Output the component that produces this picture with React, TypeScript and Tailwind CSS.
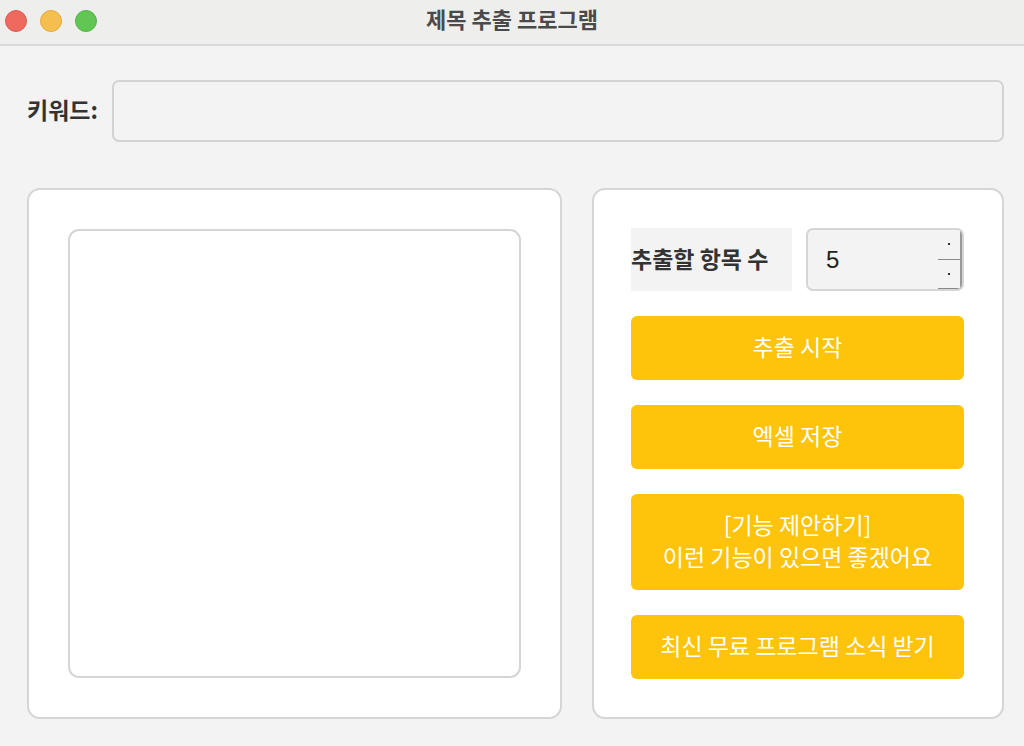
import React from 'react';

const font = { fontFamily: '"Noto Sans CJK KR", "Noto Sans", sans-serif' };

const ActionButton: React.FC<{ h: string; children: React.ReactNode }> = ({ h, children }) => (
  <button
    className={`w-full ${h} rounded-[6px] bg-[#fec30b] text-white text-[23px] leading-[32px] pb-[5px] flex flex-col items-center justify-center`}
  >
    {children}
  </button>
);

export default function App() {
  return (
    <div className="w-[1024px] h-[746px] bg-[#f3f3f3] flex flex-col overflow-hidden" style={font}>
      {/* title bar */}
      <div className="relative h-[46px] shrink-0 bg-[#eeeeec] border-b-2 border-[#d9d9d9] flex items-center justify-center">
        <div className="absolute left-[5px] top-[10px] flex gap-[13px]">
          <span className="w-[22px] h-[22px] rounded-full bg-[#ee6a5f] border border-[#dd5a50]" />
          <span className="w-[22px] h-[22px] rounded-full bg-[#f5bf4f] border border-[#e3ab3c]" />
          <span className="w-[22px] h-[22px] rounded-full bg-[#62c655] border border-[#52b346]" />
        </div>
        <span className="text-[22px] font-bold text-[#4a4a4a] -mt-[8px]">제목 추출 프로그램</span>
      </div>

      {/* keyword row */}
      <div className="flex items-center pl-[27px] pr-[20px] mt-[34px]">
        <span className="text-[23px] font-bold text-[#333] w-[85px] pb-[3px]">키워드:</span>
        <div className="flex-1 h-[62px] rounded-[7px] border-2 border-[#d3d3d3] bg-[#f3f3f3]" />
      </div>

      {/* panels */}
      <div className="flex gap-[30px] pl-[27px] pr-[20px] mt-[46px]">
        <div className="w-[536px] h-[531px] bg-white rounded-[13px] border-2 border-[#d5d5d5] p-[39px]">
          <div className="w-full h-full rounded-[11px] border-2 border-[#d5d5d5] bg-white" />
        </div>

        <div className="flex-1 h-[531px] bg-white rounded-[13px] border-2 border-[#d5d5d5] pt-[38px] pl-[37px] pr-[38px] flex flex-col">
          <div className="flex items-center h-[63px]">
            <div className="w-[161px] h-[63px] bg-[#f3f3f3] flex items-center pb-[3px]">
              <span className="text-[23px] font-bold text-[#333] whitespace-nowrap">추출할 항목 수</span>
            </div>
            <div className="ml-[14px] w-[158px] h-[63px] rounded-[7px] border-2 border-[#d5d5d5] bg-[#f3f3f3] flex overflow-hidden">
              <span className="flex-1 pl-[18px] flex items-center text-[24px] text-[#222]" style={{ fontFamily: '"Liberation Sans", sans-serif' }}>5</span>
              <div className="w-[24px] flex flex-col border-r-2 border-[#9a9a9a]">
                <div className="flex-1 flex items-center justify-center border-b border-[#8a8a8a]">
                  <span className="w-[2px] h-[2px] bg-[#333]" />
                </div>
                <div className="flex-1 flex items-center justify-center border-b border-[#8a8a8a]">
                  <span className="w-[2px] h-[2px] bg-[#333]" />
                </div>
              </div>
            </div>
          </div>

          <div className="mt-[25px] flex flex-col gap-[25px]">
            <ActionButton h="h-[64px]">추출 시작</ActionButton>
            <ActionButton h="h-[64px]">엑셀 저장</ActionButton>
            <ActionButton h="h-[96px]">
              <span>[기능 제안하기]</span>
              <span>이런 기능이 있으면 좋겠어요</span>
            </ActionButton>
            <ActionButton h="h-[64px]">최신 무료 프로그램 소식 받기</ActionButton>
          </div>
        </div>
      </div>
    </div>
  );
}
